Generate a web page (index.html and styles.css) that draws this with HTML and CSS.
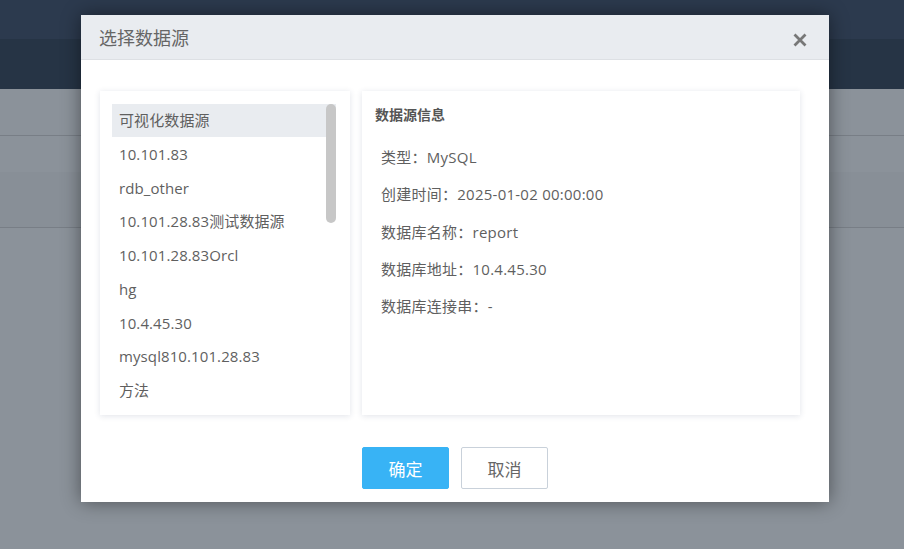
FILE: index.html
```html
<!DOCTYPE html>
<html lang="zh-CN">
<head>
<meta charset="utf-8">
<title>选择数据源</title>
<link rel="stylesheet" href="styles.css">
</head>
<body>
<div class="page">
  <div class="topbar"></div>
  <div class="navbar"></div>
  <div class="row row-a"></div>
  <div class="row row-b"></div>
  <div class="row row-c"></div>
  <div class="row-rest"></div>
</div>

<div class="dialog">
  <div class="dialog-header">
    <span class="dialog-title">选择数据源</span>
    <span class="dialog-close">
      <svg width="14" height="14" viewBox="0 0 14 14"><path d="M1.5 1.5 L12.5 12.5 M12.5 1.5 L1.5 12.5" stroke="#777" stroke-width="2.8" stroke-linecap="butt"/></svg>
    </span>
  </div>
  <div class="dialog-body">
    <div class="panel list-panel">
      <div class="list">
        <div class="item active">可视化数据源</div>
        <div class="item">10.101.83</div>
        <div class="item">rdb_other</div>
        <div class="item">10.101.28.83测试数据源</div>
        <div class="item">10.101.28.83Orcl</div>
        <div class="item">hg</div>
        <div class="item">10.4.45.30</div>
        <div class="item">mysql810.101.28.83</div>
        <div class="item">方法</div>
        <div class="scroll-thumb"></div>
      </div>
    </div>
    <div class="panel info-panel">
      <div class="info-title">数据源信息</div>
      <div class="info-list">
        <div class="info-item">类型：MySQL</div>
        <div class="info-item">创建时间：2025-01-02 00:00:00</div>
        <div class="info-item">数据库名称：report</div>
        <div class="info-item">数据库地址：10.4.45.30</div>
        <div class="info-item">数据库连接串：-</div>
      </div>
    </div>
  </div>
  <div class="dialog-footer">
    <button class="btn btn-primary">确定</button>
    <button class="btn btn-default">取消</button>
  </div>
</div>
</body>
</html>
```
FILE: styles.css
```css
* { box-sizing: border-box; }
html, body {
  margin: 0;
  padding: 0;
  width: 904px;
  height: 549px;
  overflow: hidden;
  background: #8b929a;
  font-family: "Open Sans", "Noto Sans CJK SC", sans-serif;
}
.page { width: 100%; height: 549px; overflow: hidden; }
.topbar { height: 39px; background: #2c3a4e; }
.navbar { height: 50px; background: #263445; }
.row-a { height: 47px; border-bottom: 1px solid #787e86; background: #8b929a; }
.row-b { height: 36px; background: #8b929a; }
.row-c { height: 56px; border-bottom: 1px solid #787e86; background: #888f97; }
.row-rest { height: 321px; background: #8b929a; }

.dialog {
  position: absolute;
  left: 81px;
  top: 15px;
  width: 748px;
  height: 487px;
  background: #fff;
  box-shadow: 0 0 18px rgba(0, 0, 0, 0.45);
  display: flex;
  flex-direction: column;
}
.dialog-header {
  height: 45px;
  background: #e9ecf0;
  border-bottom: 1px solid #dde0e4;
  display: flex;
  align-items: center;
  justify-content: space-between;
  padding: 0 22px 0 18px;
}
.dialog-title {
  font-family: "Noto Sans CJK SC", sans-serif;
  font-size: 18px;
  color: #666;
  line-height: 24px;
}
.dialog-close {
  display: flex;
  width: 14px;
  height: 14px;
  margin-top: 5px;
}

.dialog-body {
  display: flex;
  gap: 12px;
  padding: 31px 29px 0 19px;
}
.panel {
  height: 324px;
  background: #fff;
  box-shadow: 0 1px 6px rgba(40, 60, 100, 0.14);
}
.list-panel {
  width: 250px;
  padding: 13px 14px 0 12px;
}
.list {
  position: relative;
  height: 304px;
  overflow: hidden;
}
.item {
  height: 33.75px;
  line-height: 33px;
  padding-left: 7px;
  font-size: 15px;
  color: #5f5f5f;
  white-space: nowrap;
  letter-spacing: 0.1px;
}
.item.active { background: #e9ecf0; height: 33px; margin-bottom: 0.75px; }
.scroll-thumb {
  position: absolute;
  right: 0;
  top: 0;
  width: 10px;
  height: 119px;
  border-radius: 5px;
  background: #c7c7c7;
}

.info-panel {
  flex: 1;
  padding: 13px 13px 0 13px;
}
.info-title {
  font-family: "Noto Sans CJK SC", sans-serif;
  font-size: 14px;
  font-weight: 700;
  line-height: 20px;
  color: #555;
}
.info-list { margin-top: 15px; padding-left: 6px; }
.info-item {
  height: 37.25px;
  line-height: 37px;
  font-size: 15px;
  color: #5f5f5f;
  white-space: nowrap;
  letter-spacing: 0.25px;
}

.dialog-footer {
  display: flex;
  justify-content: center;
  gap: 12px;
  padding-top: 32px;
}
.btn {
  width: 87px;
  height: 42px;
  border-radius: 2px;
  font-family: "Noto Sans CJK SC", sans-serif;
  font-size: 17px;
  padding: 0;
  cursor: pointer;
}
.btn-primary {
  background: #38b3f5;
  border: 1px solid #38b3f5;
  color: #fff;
}
.btn-default {
  background: #fff;
  border: 1px solid #c9d1da;
  color: #666;
}
```
